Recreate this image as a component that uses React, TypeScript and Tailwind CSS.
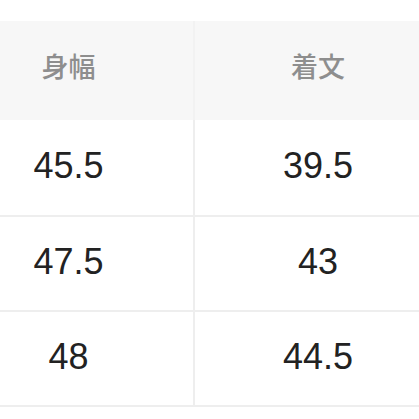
export default function App() {
  const rows = [
    ["45.5", "39.5"],
    ["47.5", "43"],
    ["48", "44.5"],
  ];
  return (
    <div className="w-[419px] h-[419px] bg-white overflow-hidden pt-[21px]" style={{ fontFamily: '"Liberation Sans", Arial, "Noto Sans CJK JP", sans-serif' }}>
      <div className="grid grid-cols-[193px_2px_1fr] h-[99px] bg-[#f7f7f7]">
        <div className="flex items-center justify-center pr-[56px] pb-[8px] text-[27px] font-medium text-[#8e8e8e]" style={{ fontFamily: '"Noto Sans CJK JP", sans-serif' }}>身幅</div>
        <div className="bg-[#f2f2f2]" />
        <div className="flex items-center justify-center pl-[22px] pb-[8px] text-[27px] font-medium text-[#8e8e8e]" style={{ fontFamily: '"Noto Sans CJK JP", sans-serif' }}>着文</div>
      </div>
      {rows.map((r, i) => (
        <div key={i} className={`grid grid-cols-[193px_2px_1fr] h-[95px] ${i === 0 ? "" : "border-t-2 border-[#eeeeee]"}`}>
          <div className="flex items-center justify-center pr-[56px] pb-[4px] text-[36px] text-[#222222]">{r[0]}</div>
          <div className="bg-[#eeeeee]" />
          <div className="flex items-center justify-center pl-[22px] pb-[4px] text-[36px] text-[#222222]">{r[1]}</div>
        </div>
      ))}
      <div className="h-[2px] bg-[#eeeeee]" />
    </div>
  );
}
